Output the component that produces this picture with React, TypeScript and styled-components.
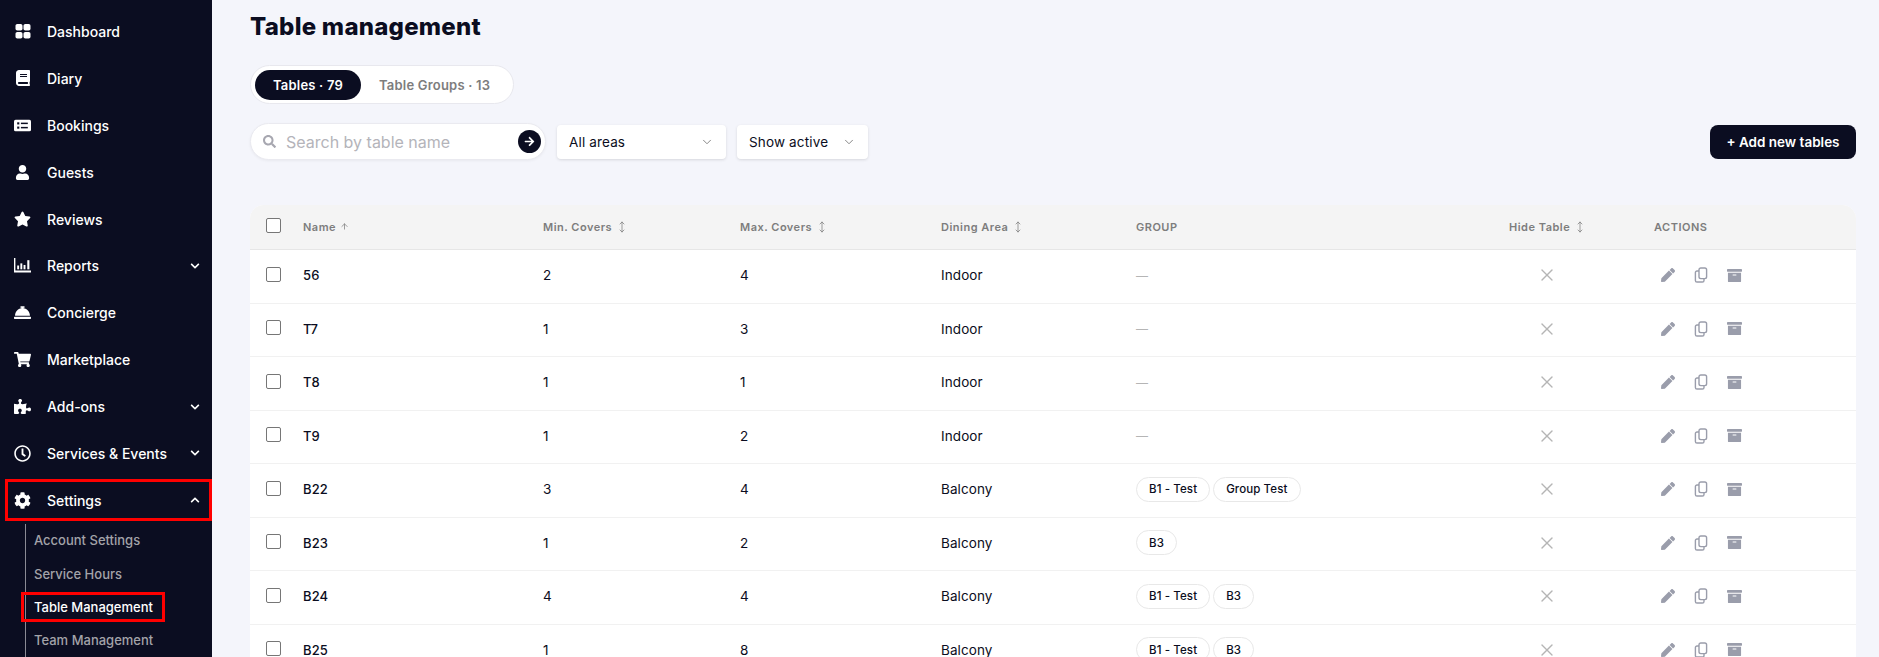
import React from 'react';
import styled, { createGlobalStyle } from 'styled-components';
import {
  FaArchive,
  FaArrowRight,
  FaBook,
  FaChevronDown,
  FaChevronUp,
  FaCog,
  FaConciergeBell,
  FaPen,
  FaPuzzlePiece,
  FaRegClock,
  FaSearch,
  FaShoppingCart,
  FaStar,
  FaUser,
} from 'react-icons/fa';
import { ArrowUp, ChevronDown, MoveVertical, X } from 'lucide-react';

const GlobalStyle = createGlobalStyle`
  html, body {
    margin: 0;
    height: 657px;
    overflow: hidden;
    background: #f4f5fb;
    font-family: Inter, "Liberation Sans", sans-serif;
  }
  * { box-sizing: border-box; }
`;

const DashboardIcon = () => (
  <svg width="16" height="15" viewBox="0 0 16 15" fill="currentColor">
    <rect x="0.5" y="0" width="7" height="6.5" rx="1.8" />
    <rect x="8.5" y="0" width="7" height="6.5" rx="1.8" />
    <rect x="0.5" y="8" width="7" height="6.5" rx="1.8" />
    <rect x="8.5" y="8" width="7" height="6.5" rx="1.8" />
  </svg>
);

const BookingsIcon = () => (
  <svg width="17" height="13" viewBox="0 0 16 12">
    <rect width="16" height="11" y="0.5" rx="1.5" fill="currentColor" />
    <rect x="3" y="3" width="2" height="2" fill="#0b0d21" />
    <rect x="3" y="7" width="2" height="2" fill="#0b0d21" />
    <rect x="6.5" y="3.3" width="6.5" height="1.4" fill="#0b0d21" />
    <rect x="6.5" y="7.3" width="6.5" height="1.4" fill="#0b0d21" />
  </svg>
);

const ReportsIcon = () => (
  <svg width="17" height="15" viewBox="0 0 16 14" fill="currentColor">
    <path d="M0 0h1.3v11.7H16V13.5H0z" />
    <rect x="3" y="7" width="1.8" height="3.6" />
    <rect x="6" y="5" width="1.8" height="5.6" />
    <rect x="9" y="6.5" width="1.8" height="4.1" />
    <rect x="12.5" y="2" width="2" height="8.6" />
  </svg>
);

const CopyIcon = () => (
  <svg width="14" height="16" viewBox="0 0 14 16" fill="none" stroke="currentColor" strokeWidth="1.4" strokeLinejoin="round">
    <rect x="5" y="1" width="7.6" height="10.6" rx="1.8" />
    <path d="M5 4H3a1.6 1.6 0 0 0-1.6 1.6v7.8A1.6 1.6 0 0 0 3 15h5.4A1.6 1.6 0 0 0 10 13.4v-1.8" />
  </svg>
);

const menu = [
  { label: 'Dashboard', icon: <DashboardIcon /> },
  { label: 'Diary', icon: <FaBook size={16} /> },
  { label: 'Bookings', icon: <BookingsIcon /> },
  { label: 'Guests', icon: <FaUser size={15} /> },
  { label: 'Reviews', icon: <FaStar size={18} /> },
  { label: 'Reports', icon: <ReportsIcon />, caret: 'down' },
  { label: 'Concierge', icon: <FaConciergeBell size={17} /> },
  { label: 'Marketplace', icon: <FaShoppingCart size={17} /> },
  { label: 'Add-ons', icon: <FaPuzzlePiece size={17} />, caret: 'down' },
  { label: 'Services & Events', icon: <FaRegClock size={17} />, caret: 'down' },
  { label: 'Settings', icon: <FaCog size={17} />, caret: 'up', marked: true },
];

const subMenu = [
  { label: 'Account Settings' },
  { label: 'Service Hours' },
  { label: 'Table Management', current: true },
  { label: 'Team Management' },
];

const columns = [
  { label: '', sort: '' },
  { label: 'Name', sort: 'up' },
  { label: 'Min. Covers', sort: 'both' },
  { label: 'Max. Covers', sort: 'both' },
  { label: 'Dining Area', sort: 'both' },
  { label: 'GROUP', sort: '' },
  { label: 'Hide Table', sort: 'both' },
  { label: 'ACTIONS', sort: '' },
];

const rows = [
  { name: '56', min: 2, max: 4, area: 'Indoor', groups: [] },
  { name: 'T7', min: 1, max: 3, area: 'Indoor', groups: [] },
  { name: 'T8', min: 1, max: 1, area: 'Indoor', groups: [] },
  { name: 'T9', min: 1, max: 2, area: 'Indoor', groups: [] },
  { name: 'B22', min: 3, max: 4, area: 'Balcony', groups: ['B1 - Test', 'Group Test'] },
  { name: 'B23', min: 1, max: 2, area: 'Balcony', groups: ['B3'] },
  { name: 'B24', min: 4, max: 4, area: 'Balcony', groups: ['B1 - Test', 'B3'] },
  { name: 'B25', min: 1, max: 8, area: 'Balcony', groups: ['B1 - Test', 'B3'] },
];

function App() {
  return (
    <Page>
      <GlobalStyle />
      <Sidebar>
        {menu.map((item) => (
          <MenuItem key={item.label} $marked={item.marked}>
            <MenuIcon>{item.icon}</MenuIcon>
            <MenuLabel>{item.label}</MenuLabel>
            {item.caret === 'down' && <Caret><FaChevronDown size={10} /></Caret>}
            {item.caret === 'up' && <Caret><FaChevronUp size={10} /></Caret>}
          </MenuItem>
        ))}
        <SubMenu>
          {subMenu.map((item) => (
            <SubItem key={item.label} $current={item.current}>{item.label}</SubItem>
          ))}
        </SubMenu>
      </Sidebar>
      <Main>
        <Title>Table management</Title>
        <Tabs>
          <Tab $active>Tables · 79</Tab>
          <Tab>Table Groups · 13</Tab>
        </Tabs>
        <Toolbar>
          <SearchBox>
            <SearchGlyph><FaSearch size={13} /></SearchGlyph>
            <SearchInput placeholder="Search by table name" readOnly />
            <SearchGo><FaArrowRight size={11} /></SearchGo>
          </SearchBox>
          <Select $width={169}>All areas<ChevronDown size={14} strokeWidth={1.5} color="#777" /></Select>
          <Select $width={131}>Show active<ChevronDown size={14} strokeWidth={1.5} color="#777" /></Select>
          <AddButton>+ Add new tables</AddButton>
        </Toolbar>
        <Table>
          <HeadRow>
            <CheckCell><Checkbox /></CheckCell>
            {columns.slice(1).map((col) => (
              <HeadCell key={col.label}>
                {col.label}
                {col.sort === 'up' && <ArrowUp size={9} strokeWidth={2} />}
                {col.sort === 'both' && <MoveVertical size={12} strokeWidth={1.5} />}
              </HeadCell>
            ))}
          </HeadRow>
          {rows.map((row) => (
            <BodyRow key={row.name}>
              <CheckCell><Checkbox /></CheckCell>
              <NameCell>{row.name}</NameCell>
              <Cell>{row.min}</Cell>
              <Cell>{row.max}</Cell>
              <Cell>{row.area}</Cell>
              <Cell>
                {row.groups.length === 0 && <Dash>—</Dash>}
                {row.groups.map((g) => <GroupPill key={g}>{g}</GroupPill>)}
              </Cell>
              <HideCell><X size={20} strokeWidth={1.6} /></HideCell>
              <Cell>
                <Actions>
                  <FaPen size={14} />
                  <CopyIcon />
                  <FaArchive size={15} />
                </Actions>
              </Cell>
            </BodyRow>
          ))}
        </Table>
      </Main>
    </Page>
  );
}

export default App;

const Page = styled.div`
  display: flex;
  height: 657px;
  overflow: hidden;
`;

const Sidebar = styled.aside`
  flex: 0 0 212px;
  background: #0b0d21;
  padding-top: 8px;
  color: #fff;
`;

const MenuItem = styled.div<{ $marked?: boolean }>`
  display: flex;
  align-items: center;
  height: 46.9px;
  padding: 0 12px 0 14px;
  ${(p) => p.$marked && `
    height: 42px;
    margin: 2.4px 0 2.4px 5px;
    padding-left: 9px;
    outline: 3px solid #f00;
    outline-offset: -3px;
  `}
`;

const MenuIcon = styled.span`
  display: flex;
  justify-content: center;
  width: 17px;
  margin-right: 16px;
`;

const MenuLabel = styled.span`
  flex: 1;
  font-size: 14px;
  font-weight: 500;
`;

const Caret = styled.span`
  display: flex;
`;

const SubMenu = styled.div`
  margin: 2px 0 0 25px;
  padding: 0;
  border-left: 1px solid #8a8a94;
  height: 200px;
`;

const SubItem = styled.div<{ $current?: boolean }>`
  display: flex;
  align-items: center;
  width: 144px;
  height: ${(p) => (p.$current ? '30px' : '33.3px')};
  margin: ${(p) => (p.$current ? '1.6px 0 1.6px -5px' : '0')};
  padding-left: ${(p) => (p.$current ? '13px' : '8px')};
  font-size: 13px;
  font-weight: 500;
  white-space: nowrap;
  color: ${(p) => (p.$current ? '#fff' : '#a3a3a9')};
  ${(p) => p.$current && `
    outline: 3px solid #f00;
    outline-offset: -3px;
  `}
`;

const Main = styled.main`
  flex: 1;
  min-width: 0;
  padding: 0 23px 0 38px;
`;

const Title = styled.h1`
  margin: 0;
  padding-top: 10px;
  height: 65px;
  font-size: 24px;
  line-height: 34px;
  font-weight: 800;
  letter-spacing: 0.25px;
  color: #0b0d21;
`;

const Tabs = styled.div`
  display: inline-flex;
  align-items: center;
  width: 264px;
  height: 39px;
  padding: 0 4px;
  background: #fff;
  border: 1px solid #e8e8ee;
  border-radius: 20px;
`;

const Tab = styled.div<{ $active?: boolean }>`
  display: flex;
  align-items: center;
  justify-content: center;
  height: 30px;
  padding: 0 18px;
  border-radius: 15px;
  font-size: 13px;
  font-weight: 600;
  letter-spacing: 0.2px;
  white-space: nowrap;
  background: ${(p) => (p.$active ? '#0b0d21' : 'transparent')};
  color: ${(p) => (p.$active ? '#fff' : '#7d7d7d')};
`;

const Toolbar = styled.div`
  display: flex;
  align-items: center;
  gap: 11px;
  margin-top: 19px;
  height: 37px;
`;

const SearchBox = styled.div`
  display: flex;
  align-items: center;
  width: 296px;
  height: 37px;
  padding: 0 4px 0 12px;
  background: #fff;
  border: 1px solid #eaeaf0;
  border-radius: 19px;
  box-shadow: 0 1px 3px rgba(0, 0, 0, 0.05);
`;

const SearchGlyph = styled.span`
  display: flex;
  color: #a7a7b0;
  margin-right: 10px;
`;

const SearchInput = styled.input`
  flex: 1;
  min-width: 0;
  border: 0;
  outline: 0;
  padding: 0;
  background: none;
  font: 400 16px Inter, "Liberation Sans", sans-serif;
  &::placeholder { color: #b4b4ba; }
`;

const SearchGo = styled.span`
  display: flex;
  align-items: center;
  justify-content: center;
  width: 23px;
  height: 23px;
  border-radius: 50%;
  background: #0b0d21;
  color: #fff;
`;

const Select = styled.div<{ $width: number }>`
  display: flex;
  align-items: center;
  justify-content: space-between;
  width: ${(p) => p.$width}px;
  height: 34px;
  padding: 0 12px;
  background: #fff;
  border-radius: 4px;
  box-shadow: 0 1px 3px rgba(0, 0, 0, 0.12);
  font-size: 13.5px;
  letter-spacing: 0.15px;
  color: #0b0d21;
`;

const AddButton = styled.button`
  margin-left: auto;
  width: 146px;
  height: 34px;
  padding: 0;
  border: 0;
  border-radius: 8px;
  background: #0b0d21;
  color: #fff;
  font: 600 13.5px Inter, "Liberation Sans", sans-serif;
`;

const Table = styled.div`
  margin-top: 45px;
  background: #fff;
  border-radius: 14px 14px 0 0;
`;

const gridColumns = '53px 240px 197px 201px 195px 373px 145px 1fr';

const HeadRow = styled.div`
  display: grid;
  grid-template-columns: ${gridColumns};
  align-items: center;
  height: 45px;
  padding-bottom: 1px;
  background: #f4f4f4;
  border-bottom: 1px solid #e6e6e6;
  border-radius: 14px 14px 0 0;
`;

const BodyRow = styled.div`
  display: grid;
  grid-template-columns: ${gridColumns};
  align-items: center;
  height: 53.5px;
  padding-bottom: 2px;
  border-bottom: 1px solid #f1f1f1;
`;

const CheckCell = styled.div`
  display: flex;
  padding: 0 0 2px 16px;
`;

const Checkbox = styled.span`
  display: block;
  width: 15px;
  height: 15px;
  border: 1px solid #767676;
  border-radius: 2px;
  background: #fff;
`;

const HeadCell = styled.div`
  display: flex;
  align-items: center;
  gap: 4px;
  font-size: 11px;
  font-weight: 600;
  letter-spacing: 0.5px;
  color: #7d7d7d;
`;

const Cell = styled.div`
  display: flex;
  align-items: center;
  gap: 3px;
  font-size: 13.5px;
  letter-spacing: 0.1px;
  color: #0b0d21;
`;

const NameCell = styled(Cell)`
  font-size: 13px;
  font-weight: 500;
`;

const HideCell = styled(Cell)`
  padding-left: 28px;
  color: #b5b5b5;
`;

const Dash = styled.span`
  font-size: 12px;
  color: #b5b5b5;
`;

const GroupPill = styled.span`
  display: inline-flex;
  align-items: center;
  height: 25px;
  padding: 0 12px;
  border: 1px solid #e8e8e8;
  border-radius: 13px;
  font-size: 11.5px;
  font-weight: 500;
  white-space: nowrap;
`;

const Actions = styled.div`
  display: flex;
  align-items: center;
  gap: 19px;
  padding-left: 7px;
  color: #9a9dab;
`;
